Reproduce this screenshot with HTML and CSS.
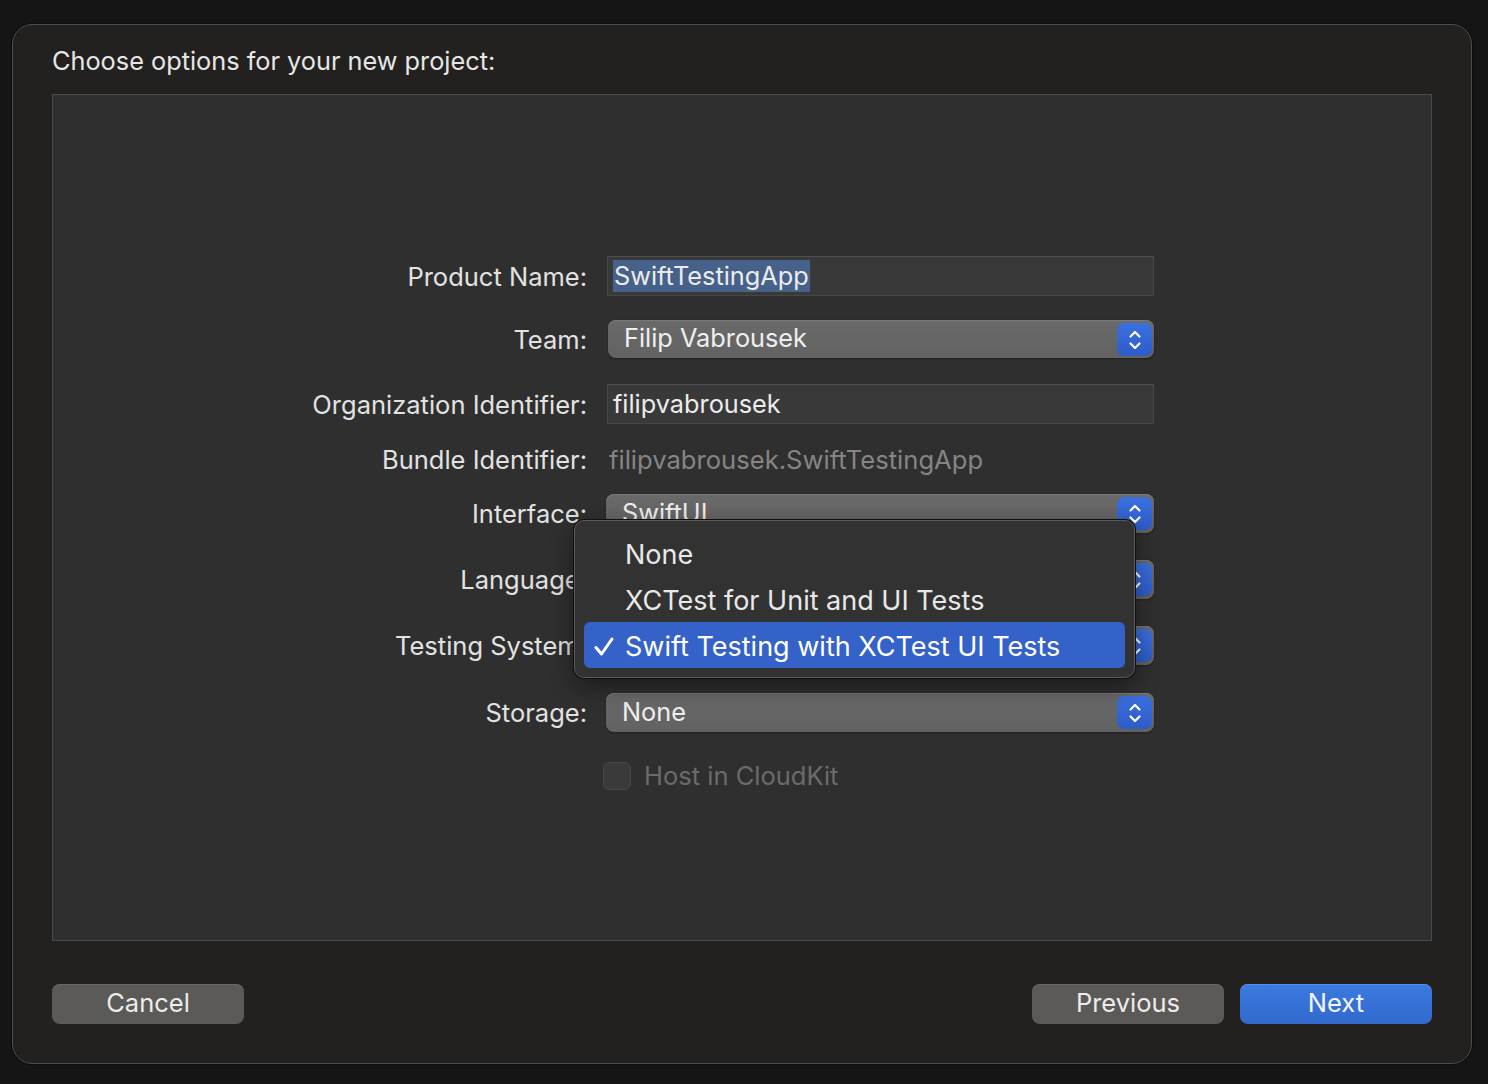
FILE: index.html
```html
<!DOCTYPE html>
<html>
<head>
<meta charset="utf-8">
<link rel="stylesheet" href="styles.css">
</head>
<body>
<div class="dialog">
  <div class="title">Choose options for your new project:</div>
  <div class="panel">
    <div class="form">
      <div class="row r-product">
        <div class="label">Product Name:</div>
        <div class="field"><span class="sel">SwiftTestingApp</span></div>
      </div>
      <div class="row r-team">
        <div class="label">Team:</div>
        <div class="popup p-team"><span class="ptext">Filip Vabrousek</span>
          <span class="stepper"><svg width="16" height="26" viewBox="0 0 16 26"><path d="M3.5 9.5 L8 5 L12.5 9.5 M3.5 16.5 L8 21 L12.5 16.5" fill="none" stroke="#fff" stroke-width="2.2" stroke-linecap="round" stroke-linejoin="round"/></svg></span>
        </div>
      </div>
      <div class="row r-org">
        <div class="label">Organization Identifier:</div>
        <div class="field">filipvabrousek</div>
      </div>
      <div class="row r-bundle">
        <div class="label">Bundle Identifier:</div>
        <div class="static">filipvabrousek.SwiftTestingApp</div>
      </div>
      <div class="row r-iface">
        <div class="label">Interface:</div>
        <div class="popup"><span class="ptext">SwiftUI</span>
          <span class="stepper"><svg width="16" height="26" viewBox="0 0 16 26"><path d="M3.5 9.5 L8 5 L12.5 9.5 M3.5 16.5 L8 21 L12.5 16.5" fill="none" stroke="#fff" stroke-width="2.2" stroke-linecap="round" stroke-linejoin="round"/></svg></span>
        </div>
      </div>
      <div class="row r-lang">
        <div class="label">Language:</div>
        <div class="popup"><span class="ptext"></span>
          <span class="stepper"><svg width="16" height="26" viewBox="0 0 16 26"><path d="M3.5 9.5 L8 5 L12.5 9.5 M3.5 16.5 L8 21 L12.5 16.5" fill="none" stroke="#fff" stroke-width="2.2" stroke-linecap="round" stroke-linejoin="round"/></svg></span>
        </div>
      </div>
      <div class="row r-test">
        <div class="label">Testing System:</div>
        <div class="popup"><span class="ptext"></span>
          <span class="stepper"><svg width="16" height="26" viewBox="0 0 16 26"><path d="M3.5 9.5 L8 5 L12.5 9.5 M3.5 16.5 L8 21 L12.5 16.5" fill="none" stroke="#fff" stroke-width="2.2" stroke-linecap="round" stroke-linejoin="round"/></svg></span>
        </div>
      </div>
      <div class="row r-storage">
        <div class="label">Storage:</div>
        <div class="popup"><span class="ptext">None</span>
          <span class="stepper"><svg width="16" height="26" viewBox="0 0 16 26"><path d="M3.5 9.5 L8 5 L12.5 9.5 M3.5 16.5 L8 21 L12.5 16.5" fill="none" stroke="#fff" stroke-width="2.2" stroke-linecap="round" stroke-linejoin="round"/></svg></span>
        </div>
      </div>
      <div class="row r-check">
        <div class="label"></div>
        <div class="checkrow"><span class="checkbox"></span><span class="checklabel">Host in CloudKit</span></div>
      </div>
    </div>
    <div class="menu">
      <div class="item">None</div>
      <div class="item">XCTest for Unit and UI Tests</div>
      <div class="item active"><svg class="check" width="22" height="22" viewBox="0 0 22 22"><path d="M3 11.5 L8.5 18 L19 3" fill="none" stroke="#fff" stroke-width="3" stroke-linecap="round" stroke-linejoin="round"/></svg>Swift Testing with XCTest UI Tests</div>
    </div>
  </div>
  <div class="footer">
    <button class="btn">Cancel</button>
    <div class="spacer"></div>
    <button class="btn">Previous</button>
    <button class="btn primary">Next</button>
  </div>
</div>
</body>
</html>
```

FILE: styles.css
```css
html, body {
  margin: 0;
  padding: 0;
  background: #151515;
  font-family: Inter, "Noto Sans", "Liberation Sans", sans-serif;
  color: #e4e4e4;
}
body {
  width: 1488px;
  height: 1084px;
  overflow: hidden;
}
.dialog {
  box-sizing: border-box;
  margin: 24px 0 0 12px;
  width: 1460px;
  height: 1040px;
  background: #22211f;
  border: 1px solid #4d4c4a;
  border-radius: 20px;
  box-shadow: 0 0 0 1px #0c0c0c;
  padding: 0 39px 0 39px;
  display: flex;
  flex-direction: column;
}
.title {
  font-size: 25.3px;
  line-height: 30px;
  margin-top: 21px;
  margin-bottom: 18px;
  color: #e6e6e6;
}
.panel {
  position: relative;
  box-sizing: border-box;
  height: 847px;
  background: #2f2f2f;
  border: 1px solid #4a4a4a;
}
.form {
  padding-top: 161px;
  display: flex;
  flex-direction: column;
}
.row {
  display: grid;
  grid-template-columns: 534px 547px;
  column-gap: 20px;
  align-items: center;
}
.label {
  text-align: right;
  font-size: 25.5px;
  color: #e2e2e2;
  white-space: nowrap;
}
.r-product { height: 40px; }
.r-team { height: 38px; margin-top: 24px; }
.r-org { height: 40px; margin-top: 26px; }
.r-bundle { height: 38px; margin-top: 16px; }
.r-iface { height: 39px; margin-top: 16px; }
.r-lang { height: 39px; margin-top: 27px; }
.r-test { height: 39px; margin-top: 27px; }
.r-storage { height: 39px; margin-top: 28px; }
.r-check { height: 28px; margin-top: 28px; }
.field {
  box-sizing: border-box;
  height: 40px;
  background: #393939;
  border: 1px solid #474747;
  border-top-color: #505050;
  font-size: 25.3px;
  line-height: 38px;
  padding-left: 5px;
  color: #ececec;
}
.sel {
  background: #46618a;
  display: inline-block;
  line-height: 32px;
  padding: 0 1px;
  margin-top: 3px;
  vertical-align: top;
}
.static {
  font-size: 25.6px;
  color: #858585;
  padding-left: 2px;
}
.popup {
  position: relative;
  box-sizing: border-box;
  height: 39px;
  margin-left: -1px;
  background: linear-gradient(#6a6a6a, #626262);
  border-radius: 8px;
  box-shadow: 0 0 0 0.5px #2a2a2a, 0 1px 2px rgba(0,0,0,0.4), inset 0 1px 0 #7a7a7a;
  display: flex;
  align-items: center;
  padding-left: 16px;
  padding-bottom: 3px;
  font-size: 25.3px;
  color: #efefef;
}
.p-team { height: 38px; margin-left: 1px; }
.ptext { flex: 1; }
.stepper {
  position: absolute;
  right: 2px;
  top: 3px;
  width: 35px;
  height: 33px;
  border-radius: 7px;
  background: linear-gradient(#3b70e0, #2d5cc7);
  display: flex;
  align-items: center;
  justify-content: center;
}
.checkrow {
  display: flex;
  align-items: center;
  margin-left: -4px;
}
.checkbox {
  box-sizing: border-box;
  width: 28px;
  height: 28px;
  border-radius: 6px;
  background: #3a3a3a;
  border: 1px solid #464646;
}
.checklabel {
  margin-left: 13px;
  font-size: 25.5px;
  color: #6b6b6b;
}
.menu {
  position: absolute;
  left: 521px;
  top: 425px;
  box-sizing: border-box;
  width: 561px;
  height: 158px;
  background: #333232;
  border: 1px solid #5a5a5a;
  border-radius: 10px;
  box-shadow: 0 0 0 1px #111, 0 8px 24px rgba(0,0,0,0.45);
  padding: 10px 9px;
}
.item {
  height: 46px;
  line-height: 48px;
  padding-left: 41px;
  font-size: 27px;
  color: #e8e8e8;
  border-radius: 6px;
  position: relative;
}
.item.active {
  background: #3562c8;
  color: #fff;
  margin-top: -1px;
  line-height: 50px;
}
.check {
  position: absolute;
  left: 9px;
  top: 14px;
}
.footer {
  display: flex;
  margin-top: 43px;
  gap: 16px;
}
.spacer { flex: 1; }
.btn {
  width: 192px;
  height: 40px;
  border: none;
  border-radius: 8px;
  background: #5b5a57;
  color: #ececec;
  font-family: Inter, "Noto Sans", sans-serif;
  font-size: 25.5px;
  padding: 0 0 3px 0;
  box-shadow: inset 0 1px 0 #676662;
}
.btn.primary {
  background: linear-gradient(#3b7ae0, #3269cc);
  box-shadow: inset 0 1px 0 #5590ec;
  color: #f2f6ff;
}
```
